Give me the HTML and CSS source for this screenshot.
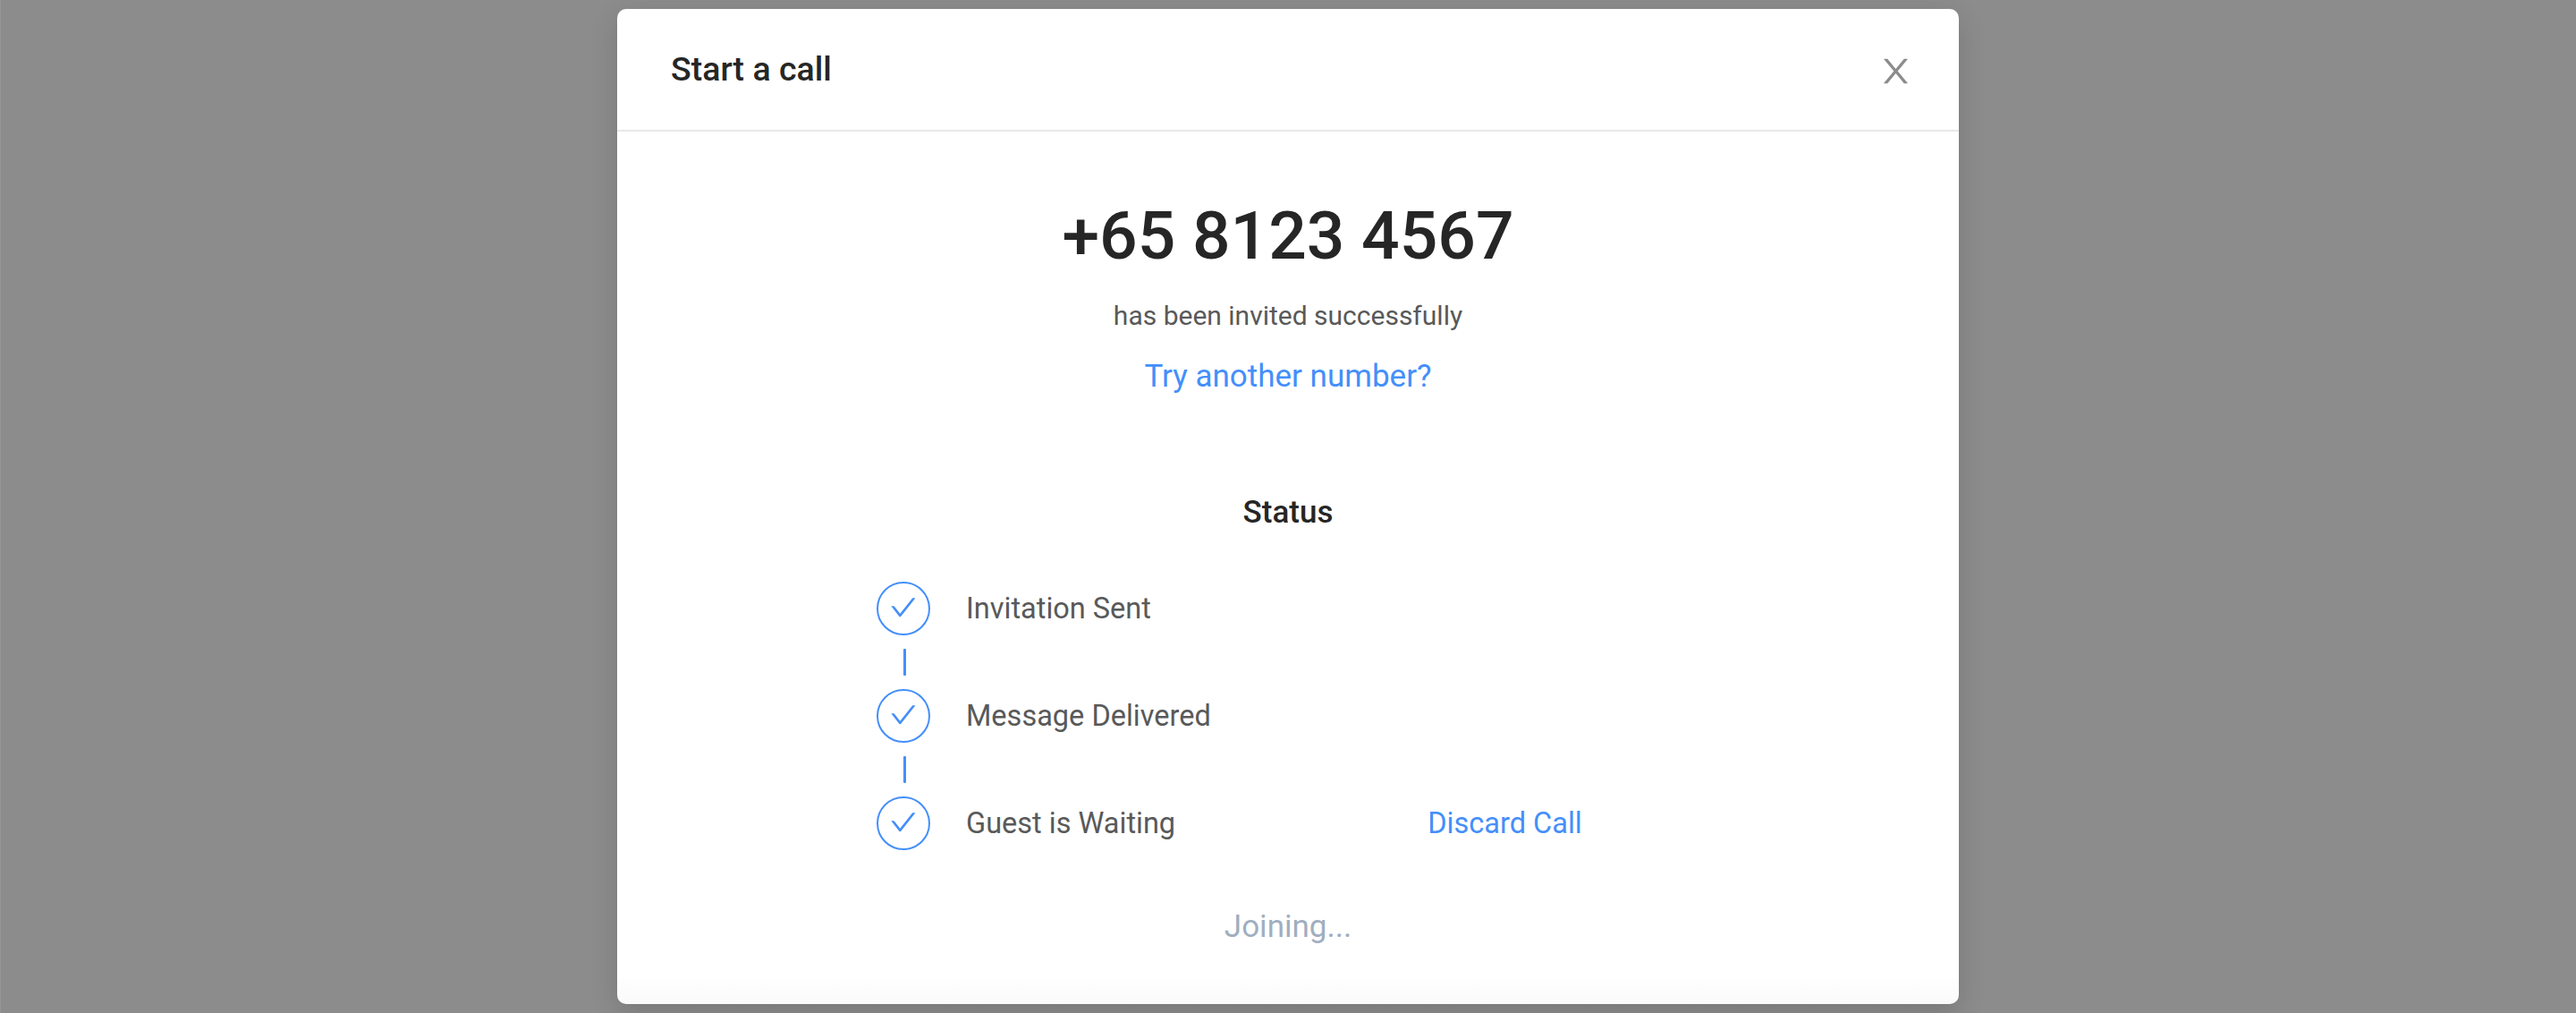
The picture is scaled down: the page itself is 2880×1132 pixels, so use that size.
FILE: index.html
```
<!DOCTYPE html>
<html lang="en">
<head>
<meta charset="utf-8">
<title>Start a call</title>
<link rel="stylesheet" href="styles.css">
</head>
<body>
<svg class="icon-defs" width="0" height="0">
  <symbol id="check" viewBox="0 0 1024 1024"><path d="M912 190h-69.9c-9.8 0-19.1 4.5-25.1 12.2L404.7 724.5 207 474a32 32 0 0 0-25.1-12.2H112c-6.7 0-10.4 7.7-6.3 12.9l273.9 347c12.8 16.2 37.4 16.2 50.3 0l488.4-618.9c4.1-5.1.4-12.8-6.3-12.8z"/></symbol>
</svg>
<main class="backdrop">
  <section class="modal">
    <header class="modal-header">
      <h1 class="modal-title">Start a call</h1>
      <button class="modal-close" aria-label="Close">
        <svg viewBox="0 0 1024 1024"><path d="M563.8 512l262.5-312.9c4.4-5.2.7-13.1-6.1-13.1h-79.8c-4.7 0-9.2 2.1-12.3 5.7L511.6 449.8 295.1 191.7c-3-3.6-7.5-5.7-12.3-5.7H203c-6.8 0-10.5 7.9-6.1 13.1L459.4 512 196.9 824.9A7.95 7.95 0 0 0 203 838h79.8c4.7 0 9.2-2.1 12.3-5.7l216.5-258.1 216.5 258.1c3 3.6 7.5 5.7 12.3 5.7h79.8c6.8 0 10.5-7.9 6.1-13.1L563.8 512z"/></svg>
      </button>
    </header>
    <div class="modal-body">
      <h2 class="phone">+65 8123 4567</h2>
      <p class="invited">has been invited successfully</p>
      <a class="retry">Try another number?</a>
      <h3 class="status-title">Status</h3>
      <ol class="steps">
        <li class="step">
          <span class="step-icon"><svg><use href="#check"/></svg></span>
          <span class="step-label">Invitation Sent</span>
        </li>
        <li class="connector"></li>
        <li class="step">
          <span class="step-icon"><svg><use href="#check"/></svg></span>
          <span class="step-label">Message Delivered</span>
        </li>
        <li class="connector"></li>
        <li class="step">
          <span class="step-icon"><svg><use href="#check"/></svg></span>
          <span class="step-label">Guest is Waiting</span>
          <a class="discard">Discard Call</a>
        </li>
      </ol>
      <p class="joining">Joining...</p>
    </div>
  </section>
</main>
</body>
</html>
```
FILE: styles.css
```
* { box-sizing: border-box; margin: 0; padding: 0; }
body { font-family: Roboto, "Liberation Sans", sans-serif; color: #262626; background: #8c8c8c; overflow: hidden; }
.icon-defs { display: none; }
.backdrop { display: flex; justify-content: center; height: 1132px; padding-top: 10px; border-left: 1px solid #969696; padding-right: 1px; }
.modal { display: flex; flex-direction: column; width: 1500px; height: 1112px; background: linear-gradient(#fff 97%, #fafafa); border-radius: 10px; box-shadow: 0 10px 30px rgba(0, 0, 0, 0.15); }
.modal-header { display: flex; align-items: center; justify-content: space-between; height: 137px; padding: 0 49px 0 60px; border-bottom: 2px solid #e8e8e8; }
.modal-title { font-size: 37.5px; font-weight: 500; line-height: 55px; }
.modal-close { display: flex; margin-top: 3px; border: 0; background: none; }
.modal-close svg { width: 43px; height: 43px; fill: #8c8c8c; }
.modal-body { display: flex; flex-direction: column; align-items: center; padding-top: 72px; }
.phone { font-size: 75px; font-weight: 500; line-height: 88px; }
.invited { margin-top: 23px; font-size: 30px; line-height: 45px; color: #595959; }
.retry { margin-top: 20px; font-size: 35px; line-height: 52px; color: #448ffa; }
.status-title { margin-top: 100px; font-size: 35px; font-weight: 500; line-height: 52px; }
.steps { width: 920px; margin-top: 51px; list-style: none; }
.step { display: grid; grid-template-columns: 100px 516.25px auto; align-items: center; height: 60px; font-size: 32.5px; line-height: 50px; }
.step-icon { display: flex; align-items: center; justify-content: center; width: 60px; height: 60px; padding-bottom: 2px; border: 2px solid #448ffa; border-radius: 50%; }
.step-icon svg { width: 33.6px; height: 33.6px; fill: #448ffa; }
.step-label { color: #595959; }
.discard { color: #448ffa; }
.connector { width: 3px; height: 30px; margin: 15px 0 15px 30px; border-radius: 1px; background: #448ffa; }
.joining { margin-top: 60px; font-size: 35px; line-height: 52px; color: #a0aec0; }
```
